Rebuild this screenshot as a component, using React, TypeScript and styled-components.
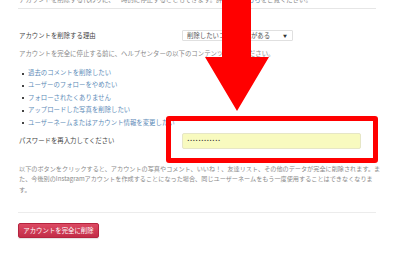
import styled, { createGlobalStyle } from 'styled-components';

const GlobalStyle = createGlobalStyle`
  html, body {
    margin: 0;
    padding: 0;
    background: #ffffff;
  }
  body {
    font-family: "Noto Sans CJK JP", "Noto Sans", sans-serif;
    -webkit-font-smoothing: antialiased;
  }
`;

const Page = styled.div`
  position: relative;
  width: 400px;
  height: 253px;
  overflow: hidden;
  background: #ffffff;
`;

const Content = styled.div`
  width: 358px;
  margin-left: 18px;
  font-size: 6.4px;
  color: #555;
`;

const TopNote = styled.div`
  margin-top: -5px;
  padding: 0 1px 4px;
  line-height: 9px;
  color: #888;
  border-bottom: 1px solid #e6e6e6;
  white-space: nowrap;
`;

const Link = styled.a`
  color: #5d8bb8;
  text-decoration: none;
`;

const ReasonRow = styled.div`
  display: flex;
  align-items: center;
  height: 11px;
  margin-top: 21px;
  padding-left: 1px;
`;

const Label = styled.div<{ $width: number }>`
  width: ${({ $width }) => $width}px;
  color: #444;
  white-space: nowrap;
`;

const Select = styled.div`
  display: flex;
  align-items: center;
  justify-content: space-between;
  box-sizing: border-box;
  width: 111px;
  height: 11px;
  padding: 0 5px 0 4px;
  border: 1px solid #e0e0e0;
  border-radius: 1px;
  background: #fff;
  color: #555;
  white-space: nowrap;
`;

const Caret = styled.span`
  font-size: 4px;
  color: #333;
`;

const Intro = styled.p`
  margin: 8px 0 0;
  padding-left: 1px;
  line-height: 10px;
  color: #888;
  white-space: nowrap;
`;

const Links = styled.ul`
  margin: 8px 0 0;
  padding: 0 0 0 10px;
  list-style: none;
`;

const LinkItem = styled.li`
  position: relative;
  height: 12.4px;
  line-height: 12.4px;
  white-space: nowrap;

  &::before {
    content: '';
    position: absolute;
    left: -6px;
    top: 5.5px;
    width: 2px;
    height: 2px;
    background: #444;
  }
`;

const PasswordRow = styled.div`
  display: flex;
  align-items: center;
  height: 16px;
  margin-top: 4px;
  padding-left: 1px;
`;

const Field = styled.div`
  position: relative;
`;

const Highlight = styled.div`
  position: absolute;
  left: -16px;
  top: -17px;
  right: -17px;
  bottom: -14px;
  border: 5px solid #ff0000;
  border-radius: 3px;
  pointer-events: none;
`;

const PasswordInput = styled.input`
  display: block;
  box-sizing: border-box;
  width: 179px;
  height: 16px;
  padding: 0 4px;
  border: 1px solid #e6e6c6;
  border-radius: 2px;
  background: #f8fabf;
  color: #333;
  font-family: "DejaVu Sans", sans-serif;
  font-size: 4.4px;
  letter-spacing: 0.2px;
  outline: none;
`;

const Warning = styled.p`
  margin: 15px 0 0;
  padding: 0 0 17px 1px;
  font-size: 6.15px;
  line-height: 10.5px;
  color: #8a8a8a;
  white-space: nowrap;
  border-bottom: 1px solid #ececec;
`;

const DeleteButton = styled.button`
  display: block;
  margin-top: 10px;
  height: 15px;
  width: 81px;
  padding: 0;
  border: 1px solid #b5243f;
  border-radius: 2px;
  background: linear-gradient(#dc4a63, #c32d48);
  color: #fff;
  font-family: inherit;
  font-size: 6.4px;
  line-height: 13px;
  box-shadow: 0 1px 1px rgba(0, 0, 0, 0.12);
`;

const Arrow = styled.svg`
  position: absolute;
  left: 204px;
  top: 0;
`;

const helpLinks = [
  '過去のコメントを削除したい',
  'ユーザーのフォローをやめたい',
  'フォローされたくありません',
  'アップロードした写真を削除したい',
  'ユーザーネームまたはアカウント情報を変更したい',
];

export default function App() {
  return (
    <Page>
      <GlobalStyle />
      <Content>
        <TopNote>
          アカウントを削除する代わりに、一時的に停止することもできます。詳しくは<Link>こちら</Link>をご覧ください。
        </TopNote>

        <ReasonRow>
          <Label $width={163}>アカウントを削除する理由</Label>
          <Select>
            削除したいコンテンツがある
            <Caret>▼</Caret>
          </Select>
        </ReasonRow>

        <Intro>アカウントを完全に停止する前に、ヘルプセンターの以下のコンテンツをご覧ください。</Intro>

        <Links>
          {helpLinks.map((text) => (
            <LinkItem key={text}>
              <Link>{text}</Link>
            </LinkItem>
          ))}
        </Links>

        <PasswordRow>
          <Label $width={163}>パスワードを再入力してください</Label>
          <Field>
            <PasswordInput type="password" defaultValue="instagram123" readOnly />
            <Highlight />
          </Field>
        </PasswordRow>

        <Warning>
          以下のボタンをクリックすると、アカウントの写真やコメント、いいね！、友達リスト、その他のデータが完全に削除されます。ま
          <br />
          た、今後別のInstagramアカウントを作成することになった場合、同じユーザーネームをもう一度使用することはできなくなりま
          <br />
          す。
        </Warning>

        <DeleteButton>アカウントを完全に削除</DeleteButton>
      </Content>

      <Arrow width="66" height="112" viewBox="0 0 66 112">
        <polygon points="18,0 47,0 47,57 65,57 33,111 1,57 18,57" fill="#ff0000" />
      </Arrow>
    </Page>
  );
}
